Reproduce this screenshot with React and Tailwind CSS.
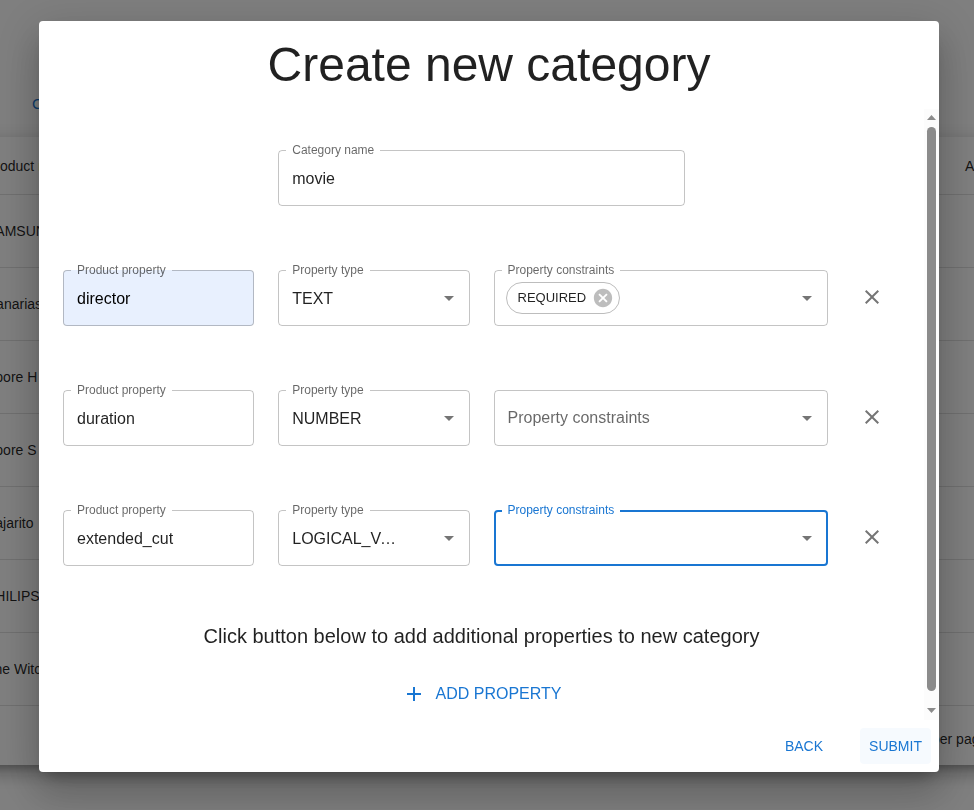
import { MdAdd, MdArrowDropDown, MdCancel, MdClose } from "react-icons/md";

const PRODUCTS = ["SAMSUNG", "Canarias", "Spore H", "Spore S", "Pajarito", "PHILIPS", "The Witcher"];

const PROPERTIES = [
  { id: "director", name: "director", type: "TEXT", constraints: ["REQUIRED"], autofilled: true },
  { id: "duration", name: "duration", type: "NUMBER", constraints: [] },
  { id: "extended-cut", name: "extended_cut", type: "LOGICAL_VALUE", constraints: [], focused: true },
];

const TYPES = ["TEXT", "NUMBER", "LOGICAL_VALUE"];

function OutlinedField({ id, label, focused, filled, children }) {
  const border = focused ? "border-2 border-[#1976d2] pl-1.5" : "border border-black/23 pl-[7px]";
  return (
    <div className="flex h-14">
      <fieldset
        className={`-mt-1.5 h-[62px] w-full min-w-0 rounded ${border} ${filled ? "bg-[#e8f0fe]" : ""}`}
      >
        <legend
          className={`px-1.5 text-xs leading-[13px] ${focused ? "text-[#1976d2]" : "text-black/60"}`}
        >
          <label htmlFor={id} className="block">
            {label}
          </label>
        </legend>
        {children}
      </fieldset>
    </div>
  );
}

function TextField({ id, label, value, autofilled }) {
  return (
    <OutlinedField id={id} label={label} filled={autofilled}>
      <input
        id={id}
        type="text"
        defaultValue={value}
        className={`block h-11 w-full bg-transparent px-1.5 text-base outline-none ${
          autofilled ? "text-black" : "text-black/87"
        }`}
      />
    </OutlinedField>
  );
}

function DropDownArrow({ focused }) {
  return (
    <MdArrowDropDown
      aria-hidden="true"
      className={`pointer-events-none absolute top-[9px] size-6 text-black/54 ${
        focused ? "right-[7px]" : "right-2"
      }`}
    />
  );
}

function TypeField({ id, value }) {
  return (
    <OutlinedField id={id} label="Property type">
      <div className="relative">
        <select
          id={id}
          defaultValue={value}
          className="block h-11 w-full appearance-none truncate bg-transparent pr-16 pl-1.5 text-base text-black/87 outline-none"
        >
          {TYPES.map((type) => (
            <option key={type}>{type}</option>
          ))}
        </select>
        <DropDownArrow />
      </div>
    </OutlinedField>
  );
}

function Chip({ label }) {
  return (
    <span className="flex h-8 items-center rounded-full border border-[#bdbdbd] pl-[11px] text-[13px] text-black/87">
      {label}
      <button type="button" aria-label={`Remove ${label}`} className="mr-[5px] ml-1.5 text-black/26">
        <MdCancel className="size-[22px]" />
      </button>
    </span>
  );
}

function ConstraintsField({ id, chips, focused }) {
  const select = (placeholder) => (
    <select
      id={id}
      defaultValue=""
      aria-label="Property constraints"
      className="block h-[42px] min-w-0 flex-1 appearance-none bg-transparent pr-10 pl-1.5 text-base text-black/60 outline-none"
    >
      <option value="">{placeholder}</option>
      <option>REQUIRED</option>
    </select>
  );

  if (chips.length === 0 && !focused) {
    return (
      <div className="relative flex h-14 items-center rounded border border-black/23 pl-[7px]">
        {select("Property constraints")}
        <MdArrowDropDown
          aria-hidden="true"
          className="pointer-events-none absolute top-[15px] right-2 size-6 text-black/54"
        />
      </div>
    );
  }

  return (
    <OutlinedField id={id} label="Property constraints" focused={focused}>
      <div className="relative flex h-[42px] items-center pl-1">
        {chips.map((chip) => (
          <Chip key={chip} label={chip} />
        ))}
        {select("")}
        <DropDownArrow focused={focused} />
      </div>
    </OutlinedField>
  );
}

function ScrollBar() {
  return (
    <div aria-hidden="true" className="flex w-[15px] shrink-0 flex-col items-center bg-[#fcfcfc] pt-1.5 pb-[7px]">
      <svg viewBox="0 0 9 5" className="h-[5px] w-[9px] fill-[#8b8b8b]">
        <path d="M4.5 0 9 5H0z" />
      </svg>
      <div className="mt-[7px] mb-[17px] w-[9px] flex-1 rounded-full bg-[#8b8b8b]" />
      <svg viewBox="0 0 9 5" className="h-[5px] w-[9px] fill-[#8b8b8b]">
        <path d="M4.5 5 9 0H0z" />
      </svg>
    </div>
  );
}

function ProductsPage() {
  return (
    <main className="min-h-screen overflow-hidden bg-white pt-20 text-sm text-black/87">
      <div className="flex h-[57px] items-start pl-8">
        <button type="button" className="h-12 text-[15px] text-[#1976d2]">
          CREATE
        </button>
      </div>
      <div className="-mx-[30px] shadow-[0_6px_6px_-3px_rgba(0,0,0,0.2),0_10px_14px_1px_rgba(0,0,0,0.14),0_4px_18px_3px_rgba(0,0,0,0.12)]">
        <table className="w-full border-collapse bg-white text-left">
          <thead>
            <tr className="h-[57px] border-b border-[#e0e0e0]">
              <th className="px-4 pt-0.5 font-medium">Product name</th>
              <th className="w-[39px] pt-0.5 font-medium">
                <div className="w-[39px]">Actions</div>
              </th>
            </tr>
          </thead>
          <tbody>
            {PRODUCTS.map((product) => (
              <tr key={product} className="h-[73px] border-b border-[#e0e0e0]">
                <td className="px-4">{product}</td>
                <td />
              </tr>
            ))}
          </tbody>
        </table>
        <div className="flex h-[59px] items-center justify-end bg-white pt-2">
          <span className="w-[72px] whitespace-nowrap">per page:</span>
        </div>
      </div>
    </main>
  );
}

export default function App() {
  return (
    <div className="font-['Liberation_Sans',Arial,sans-serif]">
      <ProductsPage />
      <div className="fixed inset-0 flex items-start justify-center overflow-hidden bg-black/50 pt-[21px] pr-[35px] pl-[39px]">
        <form
          role="dialog"
          aria-labelledby="dialog-title"
          onSubmit={(event) => event.preventDefault()}
          className="w-full max-w-[900px] rounded bg-white text-black/87 shadow-[0_11px_15px_-7px_rgba(0,0,0,0.2),0_24px_38px_3px_rgba(0,0,0,0.14),0_9px_46px_8px_rgba(0,0,0,0.12)]"
        >
          <h1 id="dialog-title" className="px-6 py-4 text-center text-5xl leading-[56px]">
            Create new category
          </h1>

          <div className="flex">
            <div className="min-w-0 flex-1 px-6 pt-[41px] pb-1.5">
              <div className="flex flex-col gap-16">
                <div className="grid grid-cols-12 gap-x-6">
                  <div className="col-span-6 col-start-4">
                    <TextField id="category-name" label="Category name" value="movie" />
                  </div>
                </div>
                {PROPERTIES.map((property) => (
                  <div key={property.id} className="grid grid-cols-12 gap-x-6">
                    <div className="col-span-3">
                      <TextField
                        id={`${property.id}-name`}
                        label="Product property"
                        value={property.name}
                        autofilled={property.autofilled}
                      />
                    </div>
                    <div className="col-span-3">
                      <TypeField id={`${property.id}-type`} value={property.type} />
                    </div>
                    <div className="col-span-5">
                      <ConstraintsField
                        id={`${property.id}-constraints`}
                        chips={property.constraints}
                        focused={property.focused}
                      />
                    </div>
                    <div className="flex h-14 items-center pb-0.5">
                      <button
                        type="button"
                        aria-label={`Remove property ${property.name}`}
                        className="flex size-10 items-center justify-center text-black/54"
                      >
                        <MdClose className="size-6" />
                      </button>
                    </div>
                  </div>
                ))}
              </div>
              <p className="mt-[54px] text-center text-xl leading-8">
                Click button below to add additional properties to new category
              </p>
              <div className="mt-[22px] flex justify-center">
                <button type="button" className="flex h-10 items-center gap-2.5 text-base text-[#1976d2]">
                  <MdAdd className="size-6" />
                  ADD PROPERTY
                </button>
              </div>
            </div>
            <ScrollBar />
          </div>

          <div className="flex justify-end gap-6 p-2">
            <button type="button" className="h-9 w-16 rounded text-sm text-[#1976d2]">
              BACK
            </button>
            <button type="submit" className="h-9 w-[71px] rounded bg-[#f6fafe] text-sm text-[#1976d2]">
              SUBMIT
            </button>
          </div>
        </form>
      </div>
    </div>
  );
}
